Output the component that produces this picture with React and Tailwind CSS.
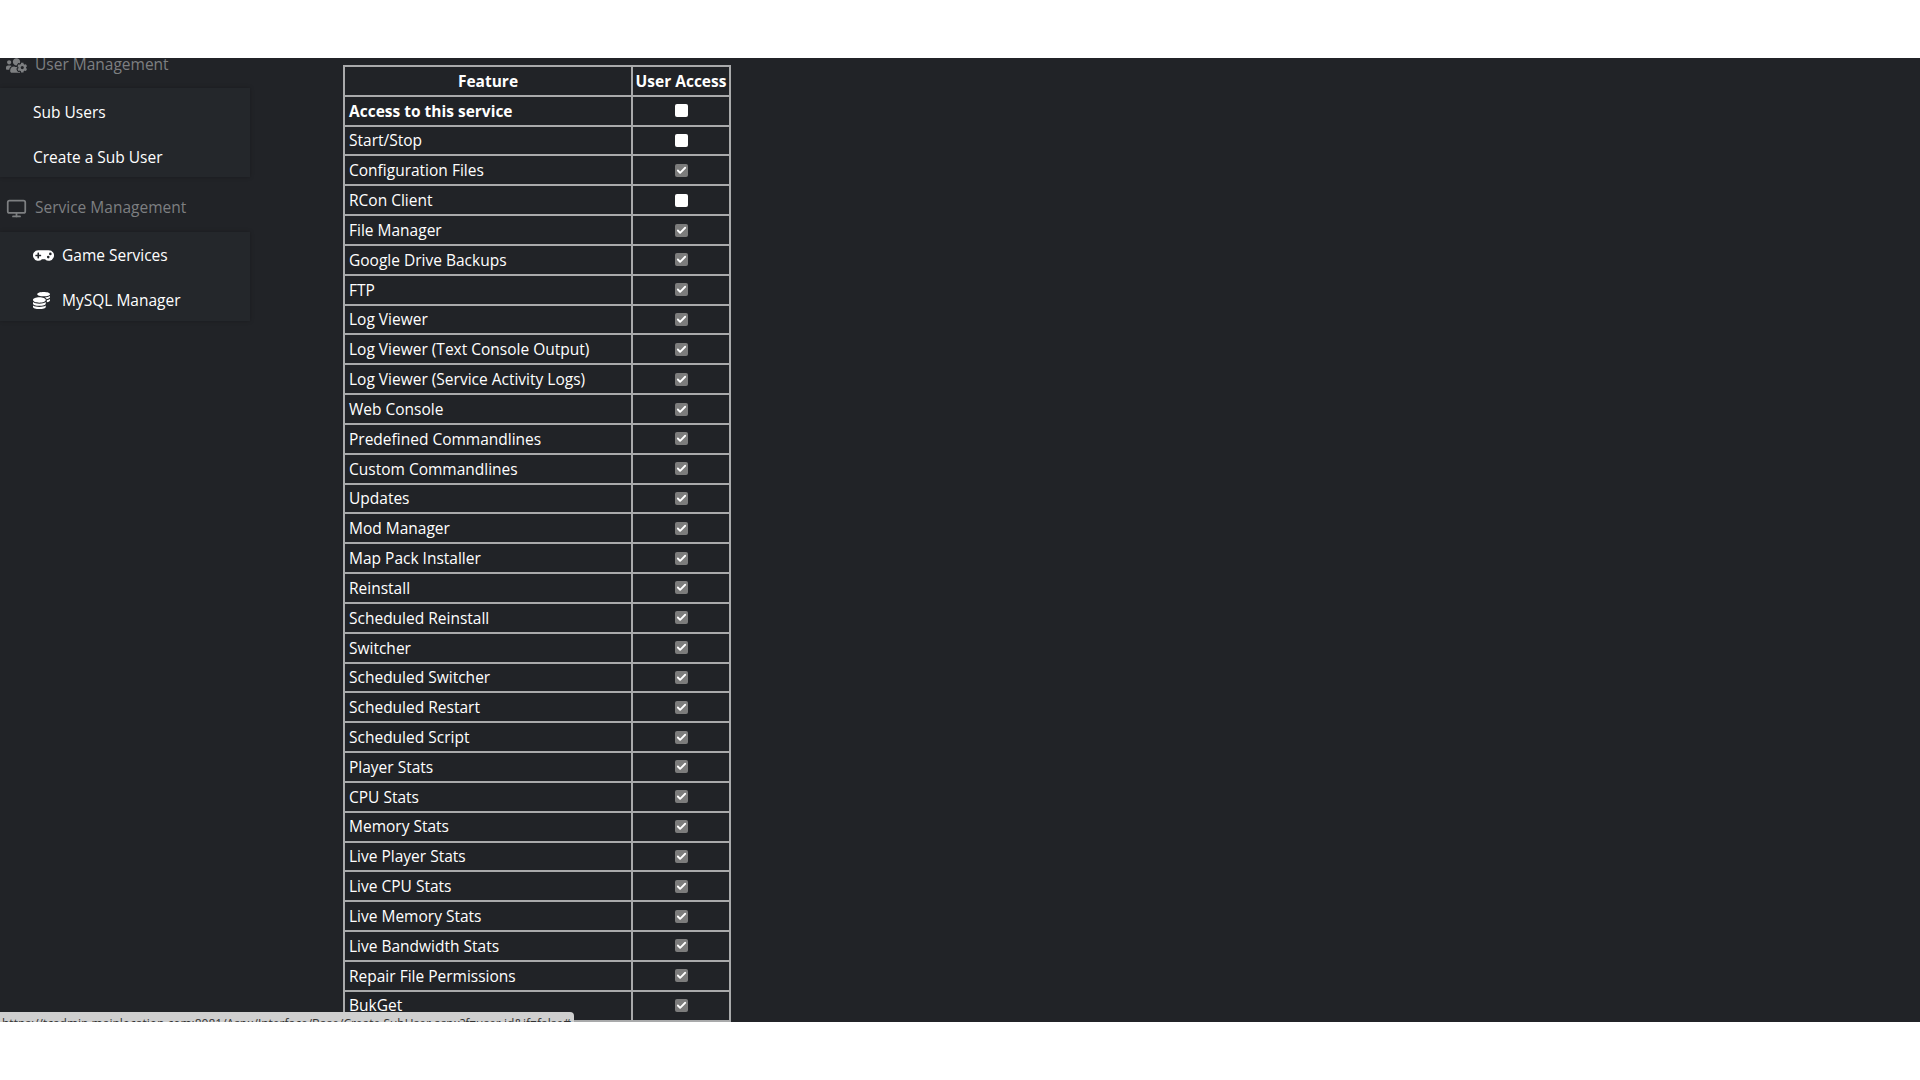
import React from 'react';
import { Monitor, Check } from 'lucide-react';
import { FaUsersCog, FaGamepad, FaCoins } from 'react-icons/fa';

const rows = [
  ['Access to this service', false],
  ['Start/Stop', false],
  ['Configuration Files', true],
  ['RCon Client', false],
  ['File Manager', true],
  ['Google Drive Backups', true],
  ['FTP', true],
  ['Log Viewer', true],
  ['Log Viewer (Text Console Output)', true],
  ['Log Viewer (Service Activity Logs)', true],
  ['Web Console', true],
  ['Predefined Commandlines', true],
  ['Custom Commandlines', true],
  ['Updates', true],
  ['Mod Manager', true],
  ['Map Pack Installer', true],
  ['Reinstall', true],
  ['Scheduled Reinstall', true],
  ['Switcher', true],
  ['Scheduled Switcher', true],
  ['Scheduled Restart', true],
  ['Scheduled Script', true],
  ['Player Stats', true],
  ['CPU Stats', true],
  ['Memory Stats', true],
  ['Live Player Stats', true],
  ['Live CPU Stats', true],
  ['Live Memory Stats', true],
  ['Live Bandwidth Stats', true],
  ['Repair File Permissions', true],
  ['BukGet', true],
];

const AccessBox = ({ checked }) =>
  checked ? (
    <span className="flex h-[13px] w-[13px] items-center justify-center rounded-[2px] bg-[#7c7c7c]">
      <Check size={11} strokeWidth={4} color="#ffffff" />
    </span>
  ) : (
    <span className="block h-[13px] w-[13px] rounded-[2px] bg-white" />
  );

const SubLink = ({ icon, label }) => (
  <div className="flex h-[45px] items-center gap-[8px] pl-[33px] text-[15.5px] text-white">
    {icon && <span className="flex w-[21px] items-center">{icon}</span>}
    <span>{label}</span>
  </div>
);

export default function App() {
  return (
    <div className="h-[1080px] w-[1920px] overflow-hidden bg-white font-['Open_Sans',sans-serif]">
      <div className="h-[58px]" />
      <div className="relative flex h-[964px] overflow-hidden bg-[#212327]">
        {/* SIDEBAR */}
        <aside className="w-[343px] shrink-0">
          <div className="-mt-[5px] flex h-[24px] items-center gap-[8px] pl-[6px] text-[15.5px] text-[#7d7f81]">
            <span className="flex w-[21px]"><FaUsersCog size={21} /></span>
            <span>User Management</span>
          </div>
          <div className="mt-[11px] h-[89px] w-[250px] bg-[#24272b] pt-[2px] shadow-[0_0_4px_rgba(0,0,0,0.25)]">
            <SubLink label="Sub Users" />
            <SubLink label="Create a Sub User" />
          </div>
          <div className="mt-[19px] flex h-[24px] items-center gap-[8px] pl-[6px] text-[15.5px] text-[#7d7f81]">
            <span className="flex w-[21px] justify-center"><Monitor size={23} strokeWidth={2} /></span>
            <span>Service Management</span>
          </div>
          <div className="mt-[12px] h-[89px] w-[250px] bg-[#24272b] pt-[1px] shadow-[0_0_4px_rgba(0,0,0,0.25)]">
            <SubLink icon={<FaGamepad size={21} />} label="Game Services" />
            <SubLink icon={<FaCoins size={17} />} label="MySQL Manager" />
          </div>
        </aside>

        {/* FEATURE TABLE */}
        <div className="pt-[7px]">
          <table className="w-[386px] table-fixed border-collapse text-[15.5px] text-white">
            <thead>
              <tr className="h-[29.84px]">
                <th className="w-[288px] border-2 border-[#a9aaab] pt-[1px] text-center font-bold">Feature</th>
                <th className="w-[98px] whitespace-nowrap border-2 border-[#a9aaab] pt-[1px] text-center font-bold">User Access</th>
              </tr>
            </thead>
            <tbody>
              {rows.map(([name, checked], i) => (
                <tr key={name} className="h-[29.84px]">
                  <td className={`border-2 border-[#a9aaab] pt-[1px] pl-[4px] ${i === 0 ? 'font-bold' : ''}`}>{name}</td>
                  <td className="border-2 border-[#a9aaab]">
                    <div className="flex justify-center">
                      <AccessBox checked={checked} />
                    </div>
                  </td>
                </tr>
              ))}
            </tbody>
          </table>
        </div>

        {/* LINK PREVIEW */}
        <div className="absolute bottom-0 left-0 h-[10px] w-[574px] overflow-hidden rounded-tr-[4px] bg-[#cfcfcf] pt-[4px] pl-[2px] text-[12px] leading-[16px] whitespace-nowrap text-[#333333]">
          https://tcadmin.mainlocation.com:8081/Aspx/Interface/Base/Create.SubUser.aspx?f=user.id&amp;if=false#
        </div>
      </div>
    </div>
  );
}
